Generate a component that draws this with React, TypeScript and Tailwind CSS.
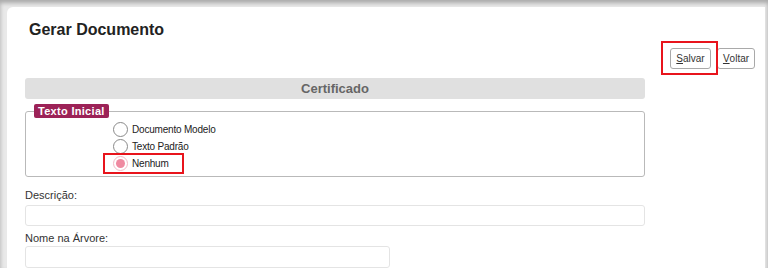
import { ReactNode } from 'react'

// Annotation box drawn over a control (red highlight in the screenshot)
function Highlight({ className }: { className: string }) {
  return <span className={`pointer-events-none absolute border-2 border-[#e8141c] ${className}`} />
}

function Radio({ label, checked, children }: { label: string; checked?: boolean; children?: ReactNode }) {
  return (
    <div className="relative flex h-[17px] items-center gap-[4px]">
      {checked ? (
        <span className="flex h-[15px] w-[15px] items-center justify-center rounded-full border border-[#f3b9c6] bg-white">
          <span className="h-[9px] w-[9px] rounded-full bg-[#ef8aa1]" />
        </span>
      ) : (
        <span className="h-[15px] w-[15px] rounded-full border border-[#8a8a8a] bg-white" />
      )}
      <span className="text-[10px] tracking-[-0.2px] text-[#222]">{label}</span>
      {children}
    </div>
  )
}

function Button({ label, className }: { label: string; className: string }) {
  return (
    <button
      className={`flex h-[21px] items-center justify-center rounded-[3px] border border-[#a9a9a9] bg-white text-[10px] text-[#333] ${className}`}
    >
      <span className="underline">{label[0]}</span>
      {label.slice(1)}
    </button>
  )
}

export default function App() {
  return (
    <div
      className="min-h-screen bg-[#e9e9e9] pl-[7px] pr-[3px] pt-[7px] shadow-[inset_0_3px_4px_rgba(0,0,0,0.28)]"
      style={{ fontFamily: '"Liberation Sans", Arial, sans-serif' }}
    >
      <div className="h-[261px] overflow-hidden rounded-tl-[6px] bg-white pl-[18px] pr-[10px]">
        {/* Header */}
        <h1 className="ml-[4px] pt-[14px] text-[16px] font-bold leading-[18px] text-[#222]">Gerar Documento</h1>

        {/* Actions */}
        <div className="mt-[9px] flex justify-end gap-[6px]">
          <div className="relative">
            <Button label="Salvar" className="w-[41px]" />
            <Highlight className="-left-[9px] -right-[7px] -top-[7px] -bottom-[6px]" />
          </div>
          <Button label="Voltar" className="w-[38px]" />
        </div>

        {/* Form */}
        <div className="w-[620px]">
          <div className="mt-[9px] flex h-[21px] items-center justify-center rounded-[3px] bg-[#e0e0e0] text-[13px] font-bold text-[#666]">
            Certificado
          </div>

          <fieldset className="mt-[5px] rounded-[3px] border border-[#b9b9b9] px-[8px] pb-[4px]">
            <legend className="h-[14px] rounded-[2px] bg-[#9c2257] px-[4px] text-[11px] font-bold leading-[14px] tracking-[0.3px] text-white">
              Texto Inicial
            </legend>
            <div className="mt-[3px] pl-[79px]">
              <Radio label="Documento Modelo" />
              <Radio label="Texto Padrão" />
              <Radio label="Nenhum" checked>
                <Highlight className="-left-[10px] -top-[2px] h-[21px] w-[81px]" />
              </Radio>
            </div>
          </fieldset>

          <label className="mt-[12px] block text-[11px] leading-[13px] text-[#333]">Descrição:</label>
          <input className="mt-[3px] block h-[21px] w-full rounded-[3px] border border-[#e4e4e4] outline-none" />

          <label className="mt-[6px] block text-[11px] leading-[13px] text-[#333]">Nome na Árvore:</label>
          <input className="mt-[1px] block h-[22px] w-[365px] rounded-[3px] border border-[#e4e4e4] outline-none" />
        </div>
      </div>
    </div>
  )
}
